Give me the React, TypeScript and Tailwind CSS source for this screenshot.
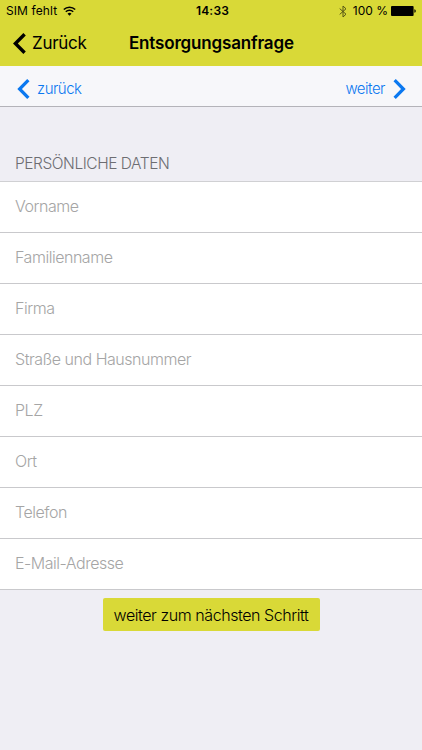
const fields = [
	'Vorname',
	'Familienname',
	'Firma',
	'Straße und Hausnummer',
	'PLZ',
	'Ort',
	'Telefon',
	'E-Mail-Adresse',
]

function Chevron({ className }: { className?: string }) {
	return (
		<svg viewBox="0 0 13 21" fill="none" stroke="currentColor" strokeWidth="3.4" className={className}>
			<path d="M11.6 1.2 2.4 10.5l9.2 9.3" />
		</svg>
	)
}

function StatusBar() {
	return (
		<div className="grid h-[22px] grid-cols-3 items-center pl-[6px] pr-[6px] text-[12px] leading-none">
			<div className="flex items-center gap-[6px]">
				<span className="tracking-[0.1px]">SIM fehlt</span>
				<svg viewBox="0 0 13 10" className="h-[10px] w-[13px]" fill="none" stroke="currentColor" strokeWidth="1.6">
					<path d="M.8 3.5a8.2 8.2 0 0 1 11.4 0" />
					<path d="M2.8 5.8a5.3 5.3 0 0 1 7.4 0" />
					<path d="M6.5 9.8 4.5 7.7a2.9 2.9 0 0 1 4 0z" fill="currentColor" stroke="none" />
				</svg>
			</div>
			<span className="pl-[3px] text-center font-semibold tracking-[0.2px]">14:33</span>
			<div className="flex items-center justify-end">
				<svg viewBox="0 0 8 13" className="mr-[6px] h-[13px] w-2 opacity-60" fill="none" stroke="currentColor">
					<path d="M.7 3.6 7 9.2 4 12V1l3 2.8L.7 9.4" />
				</svg>
				<span className="whitespace-nowrap">100 %</span>
				<svg viewBox="0 0 25 10" className="ml-[3px] h-[10px] w-[25px]" fill="currentColor">
					<rect width="22.6" height="10" rx="1" />
					<path d="M23.4 3.2c1.8.3 1.8 3.3 0 3.6z" />
				</svg>
			</div>
		</div>
	)
}

export default function App() {
	return (
		<div className="flex h-[750px] w-[422px] flex-col overflow-hidden bg-[#efeef4] font-['Inter','Liberation_Sans',sans-serif] text-black">
			<header className="h-[66px] bg-[#d9d937]">
				<StatusBar />
				<div className="grid h-[43px] grid-cols-[129px_165px_1fr] items-center">
					<button className="flex items-center gap-[6px] pl-[13px]">
						<Chevron className="h-[21px] w-[13px]" />
						<span className="text-[17px] tracking-[-0.3px]">Zurück</span>
					</button>
					<h1 className="whitespace-nowrap text-[17px] font-semibold tracking-[-0.17px]">Entsorgungsanfrage</h1>
				</div>
			</header>

			<nav className="flex h-[41px] items-center justify-between border-b border-[#b4b3b9] bg-[#f7f7fa] pl-[17px] pr-[16px] pt-[5px] text-[15px] font-light tracking-[-0.5px] text-[#0b78f0]">
				<button className="flex items-center gap-[7px]">
					<Chevron className="h-5 w-[13px]" />
					<span className="pt-px">zurück</span>
				</button>
				<button className="flex items-center gap-2">
					<span className="pt-px">weiter</span>
					<Chevron className="h-5 w-[13px] rotate-180" />
				</button>
			</nav>

			<h2 className="flex h-[75px] items-end border-b border-[#d0d0d3] pb-[7px] pl-[15px] text-[15.5px] font-light leading-[20px] tracking-[-0.45px] text-[#6d6d72]">
				PERSÖNLICHE DATEN
			</h2>

			<ul className="bg-white">
				{fields.map((label) => (
					<li
						key={label}
						className="flex h-[51px] items-center border-b border-[#c9c9cc] pb-[3px] pl-[15px] text-[16px] font-light tracking-[-0.47px] text-[#a5a5a5]"
					>
						{label}
					</li>
				))}
			</ul>

			<button className="mt-[8px] flex h-[33px] w-[217px] items-center justify-center self-center rounded-[2px] bg-[#d9d937] text-[16px] font-light tracking-[-0.43px]">
				weiter zum nächsten Schritt
			</button>
		</div>
	)
}
